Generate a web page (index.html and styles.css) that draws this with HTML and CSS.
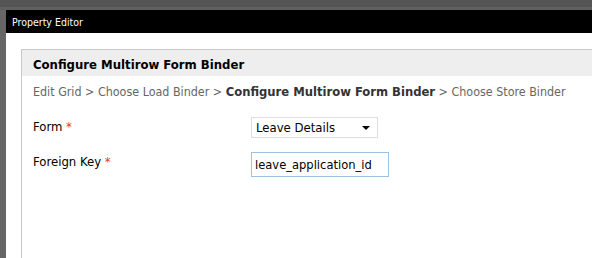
FILE: index.html
```html
<!DOCTYPE html>
<html lang="en">
<head>
    <meta charset="UTF-8">
    <title>Property Editor</title>
    <link rel="stylesheet" href="styles.css">
</head>
<body>
    <div class="topbar"></div>
    <div class="frame">
        <div class="side"></div>
        <div class="window">
            <div class="title">Property Editor</div>
            <div class="content">
                <div class="panel">
                    <div class="panel-head">Configure Multirow Form Binder</div>
                    <div class="crumbs">Edit Grid &gt; Choose Load Binder &gt; <b>Configure Multirow Form Binder</b> &gt; Choose Store Binder</div>
                    <div class="row">
                        <label>Form <span class="req">*</span></label>
                        <div class="select"><span>Leave Details</span><span class="arrow"></span></div>
                    </div>
                    <div class="row">
                        <label>Foreign Key <span class="req">*</span></label>
                        <input type="text" value="leave_application_id">
                    </div>
                </div>
            </div>
        </div>
    </div>
</body>
</html>
```

FILE: styles.css
```css
html, body { margin: 0; height: 100%; }
body { font-family: "DejaVu Sans Condensed", "Liberation Sans", sans-serif; font-size: 13px; color: #000; background: #555; overflow: hidden; }
.topbar { height: 7px; background: #555; border-bottom: 3px solid #606060; }
.frame { display: flex; height: calc(100% - 10px); }
.side { width: 6px; background: #666; }
.window { flex: 1; display: flex; flex-direction: column; background: #fff; }
.title { height: 23px; line-height: 25px; background: #000; color: #fff; padding-left: 6px; font-size: 10.5px; }
.content { flex: 1; padding: 16px 0 0 15px; }
.panel { border-left: 1px solid #c8c8c8; border-top: 1px solid #c8c8c8; height: 100%; }
.panel-head { background: #eee; height: 26px; line-height: 29px; padding-left: 11px; font-weight: bold; }
.crumbs { color: #666; padding: 8px 0 0 11px; height: 23px; font-size: 12.4px; }
.crumbs b { color: #333; font-size: 12.9px; }
.row { display: flex; align-items: flex-start; padding-left: 11px; margin-top: 10px; }
.row + .row { margin-top: 14px; }
.row label { width: 218px; padding-top: 2px; }
.req { color: #e33; }
.select { width: 127px; height: 21px; border: 1px solid #ddd; display: flex; align-items: center; justify-content: space-between; padding-left: 4px; box-sizing: border-box; }
.arrow { width: 0; height: 0; border-left: 4px solid transparent; border-right: 4px solid transparent; border-top: 4px solid #000; margin-right: 7px; }
input { font-family: inherit; font-size: 12.8px; width: 138px; height: 25px; box-sizing: border-box; border: 1px solid #9ec3e0; padding: 0 3px; margin: 0; outline: none; }
```
